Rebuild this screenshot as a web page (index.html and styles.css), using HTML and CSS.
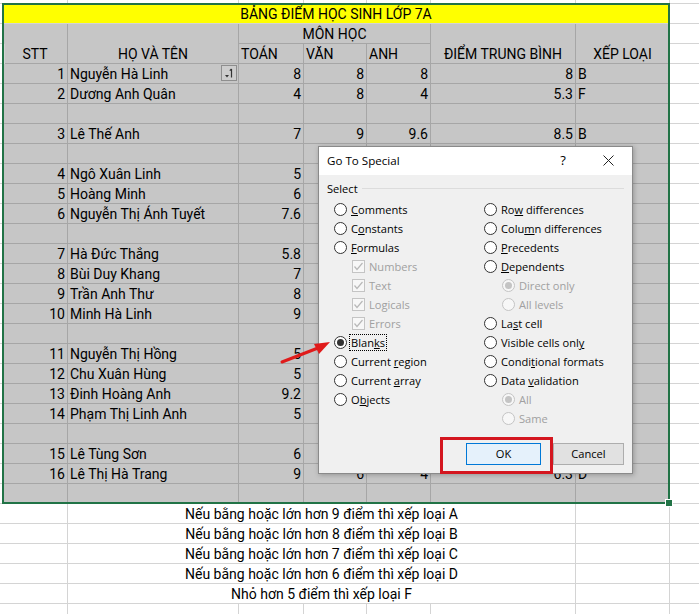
FILE: index.html
```html
<!DOCTYPE html>
<html lang="vi">
<head>
<meta charset="utf-8">
<title>Go To Special</title>
<link rel="stylesheet" href="styles.css">
</head>
<body>
<div class="sheet">
  <!-- row 0 (partial) -->
  <div class="c"></div><div class="c"></div><div class="c"></div><div class="c"></div><div class="c"></div><div class="c"></div><div class="c"></div><div class="c"></div><div class="c"></div>
  <!-- row 1 -->
  <div class="c"></div><div class="c y ctr cs7">BẢNG ĐIỂM HỌC SINH LỚP 7A</div><div class="c"></div>
  <!-- row 2 -->
  <div class="c"></div><div class="c s ctr rs2">STT</div><div class="c s ctr rs2">HỌ VÀ TÊN</div><div class="c s ctr cs3">MÔN HỌC</div><div class="c s ctr rs2">ĐIỂM TRUNG BÌNH</div><div class="c s ctr rs2">XẾP LOẠI</div><div class="c"></div>
  <!-- row 3 -->
  <div class="c"></div><div class="c s">TOÁN</div><div class="c s">VĂN</div><div class="c s">ANH</div><div class="c"></div>
  <!-- data -->
  <div class="c"></div><div class="c s r">1</div><div class="c s">Nguyễn Hà Linh</div><div class="c s r">8</div><div class="c s r">8</div><div class="c s r">8</div><div class="c s r">8</div><div class="c s">B</div><div class="c"></div>
  <div class="c"></div><div class="c s r">2</div><div class="c s">Dương Anh Quân</div><div class="c s r">4</div><div class="c s r">8</div><div class="c s r">4</div><div class="c s r">5.3</div><div class="c s">F</div><div class="c"></div>
  <div class="c"></div><div class="c s"></div><div class="c s"></div><div class="c s"></div><div class="c s"></div><div class="c s"></div><div class="c s"></div><div class="c s"></div><div class="c"></div>
  <div class="c"></div><div class="c s r">3</div><div class="c s">Lê Thế Anh</div><div class="c s r">7</div><div class="c s r">9</div><div class="c s r">9.6</div><div class="c s r">8.5</div><div class="c s">B</div><div class="c"></div>
  <div class="c"></div><div class="c s"></div><div class="c s"></div><div class="c s"></div><div class="c s"></div><div class="c s"></div><div class="c s"></div><div class="c s"></div><div class="c"></div>
  <div class="c"></div><div class="c s r">4</div><div class="c s">Ngô Xuân Linh</div><div class="c s r">5</div><div class="c s"></div><div class="c s"></div><div class="c s"></div><div class="c s"></div><div class="c"></div>
  <div class="c"></div><div class="c s r">5</div><div class="c s">Hoàng Minh</div><div class="c s r">6</div><div class="c s"></div><div class="c s"></div><div class="c s"></div><div class="c s"></div><div class="c"></div>
  <div class="c"></div><div class="c s r">6</div><div class="c s">Nguyễn Thị Ánh Tuyết</div><div class="c s r">7.6</div><div class="c s"></div><div class="c s"></div><div class="c s"></div><div class="c s"></div><div class="c"></div>
  <div class="c"></div><div class="c s"></div><div class="c s"></div><div class="c s"></div><div class="c s"></div><div class="c s"></div><div class="c s"></div><div class="c s"></div><div class="c"></div>
  <div class="c"></div><div class="c s r">7</div><div class="c s">Hà Đức Thắng</div><div class="c s r">5.8</div><div class="c s"></div><div class="c s"></div><div class="c s"></div><div class="c s"></div><div class="c"></div>
  <div class="c"></div><div class="c s r">8</div><div class="c s">Bùi Duy Khang</div><div class="c s r">7</div><div class="c s"></div><div class="c s"></div><div class="c s"></div><div class="c s"></div><div class="c"></div>
  <div class="c"></div><div class="c s r">9</div><div class="c s">Trần Anh Thư</div><div class="c s r">8</div><div class="c s"></div><div class="c s"></div><div class="c s"></div><div class="c s"></div><div class="c"></div>
  <div class="c"></div><div class="c s r">10</div><div class="c s">Minh Hà Linh</div><div class="c s r">9</div><div class="c s"></div><div class="c s"></div><div class="c s"></div><div class="c s"></div><div class="c"></div>
  <div class="c"></div><div class="c s"></div><div class="c s"></div><div class="c s"></div><div class="c s"></div><div class="c s"></div><div class="c s"></div><div class="c s"></div><div class="c"></div>
  <div class="c"></div><div class="c s r">11</div><div class="c s">Nguyễn Thị Hồng</div><div class="c s r">5</div><div class="c s"></div><div class="c s"></div><div class="c s"></div><div class="c s"></div><div class="c"></div>
  <div class="c"></div><div class="c s r">12</div><div class="c s">Chu Xuân Hùng</div><div class="c s r">5</div><div class="c s"></div><div class="c s"></div><div class="c s"></div><div class="c s"></div><div class="c"></div>
  <div class="c"></div><div class="c s r">13</div><div class="c s">Đinh Hoàng Anh</div><div class="c s r">9.2</div><div class="c s"></div><div class="c s"></div><div class="c s"></div><div class="c s"></div><div class="c"></div>
  <div class="c"></div><div class="c s r">14</div><div class="c s">Phạm Thị Linh Anh</div><div class="c s r">5</div><div class="c s"></div><div class="c s"></div><div class="c s"></div><div class="c s"></div><div class="c"></div>
  <div class="c"></div><div class="c s"></div><div class="c s"></div><div class="c s"></div><div class="c s"></div><div class="c s"></div><div class="c s"></div><div class="c s"></div><div class="c"></div>
  <div class="c"></div><div class="c s r">15</div><div class="c s">Lê Tùng Sơn</div><div class="c s r">6</div><div class="c s"></div><div class="c s"></div><div class="c s"></div><div class="c s"></div><div class="c"></div>
  <div class="c"></div><div class="c s r">16</div><div class="c s">Lê Thị Hà Trang</div><div class="c s r">9</div><div class="c s r">6</div><div class="c s r">4</div><div class="c s r">6.3</div><div class="c s">D</div><div class="c"></div>
  <div class="c"></div><div class="c s"></div><div class="c s"></div><div class="c s"></div><div class="c s"></div><div class="c s"></div><div class="c s"></div><div class="c s"></div><div class="c"></div>
  <!-- notes -->
  <div class="c"></div><div class="c"></div><div class="c ctr cs5">Nếu bằng hoặc lớn hơn 9 điểm thì xếp loại A</div><div class="c"></div><div class="c"></div>
  <div class="c"></div><div class="c"></div><div class="c ctr cs5">Nếu bằng hoặc lớn hơn 8 điểm thì xếp loại B</div><div class="c"></div><div class="c"></div>
  <div class="c"></div><div class="c"></div><div class="c ctr cs5">Nếu bằng hoặc lớn hơn 7 điểm thì xếp loại C</div><div class="c"></div><div class="c"></div>
  <div class="c"></div><div class="c"></div><div class="c ctr cs5">Nếu bằng hoặc lớn hơn 6 điểm thì xếp loại D</div><div class="c"></div><div class="c"></div>
  <div class="c"></div><div class="c"></div><div class="c ctr cs5">Nhỏ hơn 5 điểm thì xếp loại F</div><div class="c"></div><div class="c"></div>
  <div class="c"></div><div class="c"></div><div class="c"></div><div class="c"></div><div class="c"></div><div class="c"></div><div class="c"></div><div class="c"></div><div class="c"></div>
</div>

<div class="selbox"></div>
<div class="handle"></div>

<div class="sorticon">
  <svg width="14" height="14" viewBox="0 0 14 14"><path d="M3 9 L5 11.5 L7 9 Z" fill="#333"/><path d="M9.5 3 V11.5 M9.5 3 L7.8 4.7" fill="none" stroke="#333" stroke-width="1.2"/></svg>
</div>

<div class="dlg">
  <div class="tbar">
    <span class="ttl">Go To Special</span>
    <span class="tq">?</span>
    <span class="tx"><svg width="11" height="11" viewBox="0 0 11 11"><path d="M0.5 0.5 L10.5 10.5 M10.5 0.5 L0.5 10.5" stroke="#222" stroke-width="1"/></svg></span>
  </div>
  <div class="dbody">
    <div class="legend"><span>Select</span><span class="gline"></span></div>
    <div class="opts">
      <div class="ocol first">
        <div class="opt"><span class="rb"></span><span><u>C</u>omments</span></div>
        <div class="opt"><span class="rb"></span><span>C<u>o</u>nstants</span></div>
        <div class="opt"><span class="rb"></span><span><u>F</u>ormulas</span></div>
        <div class="opt sub dis"><span class="cb"><svg width="11" height="11" viewBox="0 0 11 11"><path d="M1.5 5.5 L4 8.5 L9.5 2" fill="none" stroke="#b8b8b8" stroke-width="1.2"/></svg></span><span>Numbers</span></div>
        <div class="opt sub dis"><span class="cb"><svg width="11" height="11" viewBox="0 0 11 11"><path d="M1.5 5.5 L4 8.5 L9.5 2" fill="none" stroke="#b8b8b8" stroke-width="1.2"/></svg></span><span>Text</span></div>
        <div class="opt sub dis"><span class="cb"><svg width="11" height="11" viewBox="0 0 11 11"><path d="M1.5 5.5 L4 8.5 L9.5 2" fill="none" stroke="#b8b8b8" stroke-width="1.2"/></svg></span><span>Logicals</span></div>
        <div class="opt sub dis"><span class="cb"><svg width="11" height="11" viewBox="0 0 11 11"><path d="M1.5 5.5 L4 8.5 L9.5 2" fill="none" stroke="#b8b8b8" stroke-width="1.2"/></svg></span><span>Errors</span></div>
        <div class="opt"><span class="rb on"></span><span class="focus">Blan<u>k</u>s</span></div>
        <div class="opt"><span class="rb"></span><span>Current <u>r</u>egion</span></div>
        <div class="opt"><span class="rb"></span><span>Current <u>a</u>rray</span></div>
        <div class="opt"><span class="rb"></span><span>O<u>b</u>jects</span></div>
      </div>
      <div class="ocol">
        <div class="opt"><span class="rb"></span><span>Ro<u>w</u> differences</span></div>
        <div class="opt"><span class="rb"></span><span>Colu<u>m</u>n differences</span></div>
        <div class="opt"><span class="rb"></span><span><u>P</u>recedents</span></div>
        <div class="opt"><span class="rb"></span><span><u>D</u>ependents</span></div>
        <div class="opt sub dis"><span class="rb on"></span><span>Direct only</span></div>
        <div class="opt sub dis"><span class="rb"></span><span>All levels</span></div>
        <div class="opt"><span class="rb"></span><span>La<u>s</u>t cell</span></div>
        <div class="opt"><span class="rb"></span><span>Visible cells onl<u>y</u></span></div>
        <div class="opt"><span class="rb"></span><span>Condi<u>t</u>ional formats</span></div>
        <div class="opt"><span class="rb"></span><span>Data <u>v</u>alidation</span></div>
        <div class="opt sub dis"><span class="rb on"></span><span>All</span></div>
        <div class="opt sub dis"><span class="rb"></span><span>Same</span></div>
      </div>
    </div>
    <div class="btns">
      <button class="btn ok">OK</button>
      <button class="btn cancel">Cancel</button>
    </div>
  </div>
</div>

<svg class="arrow" width="60" height="34" viewBox="0 0 60 34">
  <line x1="6" y1="28" x2="42" y2="14" stroke="#e01b1b" stroke-width="3" stroke-linecap="round"/>
  <polygon points="54,8 38,10 43,20" fill="#e01b1b"/>
</svg>

<div class="redbox"></div>
</body>
</html>
```

FILE: styles.css
```css
* { box-sizing: border-box; }
html, body { margin: 0; padding: 0; }
body {
  width: 699px;
  height: 614px;
  overflow: hidden;
  position: relative;
  background: #fff;
  font-family: Roboto, "Liberation Sans", sans-serif;
  font-size: 14px;
  color: #000;
}

/* spreadsheet grid */
.sheet {
  display: grid;
  grid-template-columns: 3px 65px 171px 65px 63px 64px 145px 94px 60px;
  grid-template-rows: 4px;
  grid-auto-rows: 20px;
  width: 730px;
}
.c {
  border-right: 1px solid #d4d4d4;
  border-bottom: 1px solid #d4d4d4;
  background: #fff;
  display: flex;
  align-items: flex-end;
  padding: 0 2px 0 2px;
  line-height: 17px;
  white-space: nowrap;
  overflow: visible;
  min-width: 0;
}
.s { background: #c6c6c6; border-color: #a6a6a6; }
.y { background: #ffff00; border-color: #d4d4d4; }
.r { justify-content: flex-end; }
.ctr { justify-content: center; }
.rs2 { grid-row: span 2; }
.cs3 { grid-column: span 3; }
.cs5 { grid-column: span 5; }
.cs7 { grid-column: span 7; }

/* selection outline */
.selbox {
  position: absolute;
  left: 2px;
  top: 3px;
  width: 668px;
  height: 501px;
  border: 2px solid #217346;
  pointer-events: none;
}
.handle {
  position: absolute;
  left: 666px;
  top: 500px;
  width: 6px;
  height: 6px;
  background: #217346;
  outline: 1px solid #fff;
}

.sorticon {
  position: absolute;
  left: 221px;
  top: 65px;
  width: 16px;
  height: 16px;
  border: 1px solid #8e8e8e;
  background: #cdcdcd;
  display: flex;
  align-items: center;
  justify-content: center;
}

.arrow {
  position: absolute;
  left: 276px;
  top: 334px;
}

/* dialog */
.dlg {
  position: absolute;
  left: 318px;
  top: 146px;
  width: 315px;
  height: 328px;
  background: #f0f0f0;
  border: 1px solid #8a8a8a;
  box-shadow: 1px 1px 5px rgba(0,0,0,0.25);
  display: flex;
  flex-direction: column;
  font-family: "Open Sans", "Noto Sans", sans-serif;
  font-size: 11.1px;
  color: #000;
}
.tbar {
  height: 28px;
  background: #fff;
  display: flex;
  align-items: center;
  padding: 0 0 2px 8px;
  flex: none;
}
.ttl { font-size: 11.6px; }
.tq {
  margin-left: auto;
  width: 30px;
  text-align: center;
  font-size: 13px;
}
.tx {
  width: 30px;
  margin-left: 15px;
  margin-right: 9px;
  display: flex;
  justify-content: center;
}
.dbody {
  flex: 1;
  display: flex;
  flex-direction: column;
  padding: 5px 8px 8px 8px;
}
.legend {
  height: 16px;
  display: flex;
  align-items: center;
}
.gline {
  flex: 1;
  height: 1px;
  background: #dcdcdc;
  margin-left: 4px;
}
.opts {
  display: flex;
  margin-top: 4px;
}
.ocol { display: flex; flex-direction: column; }
.ocol.first { width: 157px; padding-left: 7px; }
.opt {
  height: 19px;
  display: flex;
  align-items: center;
  gap: 4px;
  white-space: nowrap;
}
.opt.sub { padding-left: 18px; }
.opt.dis { color: #a0a0a0; }
.rb {
  width: 13px;
  height: 13px;
  border-radius: 50%;
  border: 1px solid #333;
  background: #fff;
  display: flex;
  align-items: center;
  justify-content: center;
  flex: none;
}
.rb.on::after {
  content: "";
  width: 7px;
  height: 7px;
  border-radius: 50%;
  background: #333;
}
.dis .rb { border-color: #c4c4c4; background: #f7f7f7; }
.dis .rb.on::after { background: #c4c4c4; }
.cb {
  width: 13px;
  height: 13px;
  border: 1px solid #c4c4c4;
  background: #f7f7f7;
  display: flex;
  align-items: center;
  justify-content: center;
  flex: none;
}
.focus { outline: 1px dotted #000; outline-offset: 0; padding: 0 1px; margin-left: -1px; }
u { text-decoration-thickness: 1px; text-underline-offset: 1px; }

.btns {
  margin-top: auto;
  display: flex;
  justify-content: flex-end;
  gap: 12px;
}
.btn {
  height: 22px;
  font-family: "Open Sans", "Noto Sans", sans-serif;
  font-size: 11.1px;
  color: #000;
  padding: 0 0 1px 0;
}
.ok { width: 75px; background: #e5f1fb; border: 1px solid #0078d7; }
.cancel { width: 71px; background: #e1e1e1; border: 1px solid #adadad; }

.redbox {
  position: absolute;
  left: 440px;
  top: 437px;
  width: 113px;
  height: 37px;
  border: 3px solid #d4161f;
  pointer-events: none;
}
```
